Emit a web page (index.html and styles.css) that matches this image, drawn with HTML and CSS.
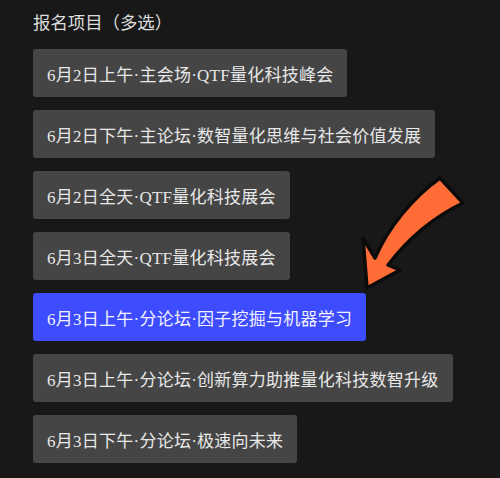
FILE: index.html
```html
<!DOCTYPE html>
<html lang="zh-CN">
<head>
    <meta charset="UTF-8">
    <meta name="viewport" content="width=device-width, initial-scale=1.0">
    <title>报名项目</title>
    <link rel="stylesheet" href="styles.css">
</head>
<body>
    <div class="form">
        <div class="label">报名项目（多选）</div>
        <div class="options">
            <button class="opt">6月2日上午·主会场·QTF量化科技峰会</button>
            <button class="opt">6月2日下午·主论坛·数智量化思维与社会价值发展</button>
            <button class="opt">6月2日全天·QTF量化科技展会</button>
            <button class="opt">6月3日全天·QTF量化科技展会</button>
            <button class="opt selected">6月3日上午·分论坛·因子挖掘与机器学习</button>
            <button class="opt">6月3日上午·分论坛·创新算力助推量化科技数智升级</button>
            <button class="opt">6月3日下午·分论坛·极速向未来</button>
        </div>
    </div>

    <!-- hand-drawn pointer over the selected option -->
    <svg class="arrow" width="500" height="478" viewBox="0 0 500 478">
        <path d="M440 178 L463 203 C438 215 410 236 388 265 L400 270 L367 288 L363 238 L375 258 C388 228 412 198 440 178 Z"
              fill="#ff6c35" stroke="#0b0b0b" stroke-width="3.5" stroke-linejoin="round"/>
    </svg>
</body>
</html>
```

FILE: styles.css
```css
html, body { margin: 0; background: #181818; }
body { font-family: "Liberation Serif", "Noto Sans CJK SC", serif; color: #e6e6e6; }
.form { padding: 10px 33px; }
.label { font-size: 17.4px; line-height: 24px; color: #dcdcdc; font-family: "Noto Sans CJK SC", sans-serif; margin-bottom: 15px; }
.options { display: flex; flex-direction: column; align-items: flex-start; gap: 13px; }
.opt { height: 48px; padding: 0 14px; border: none; border-radius: 3px; background: #454545; color: #e8e8e8; font-family: inherit; font-size: 17px; letter-spacing: 0.25px; }
.opt.selected { background: #3d4cff; color: #f2f2ff; }
.arrow { position: absolute; left: 0; top: 0; pointer-events: none; }
```
